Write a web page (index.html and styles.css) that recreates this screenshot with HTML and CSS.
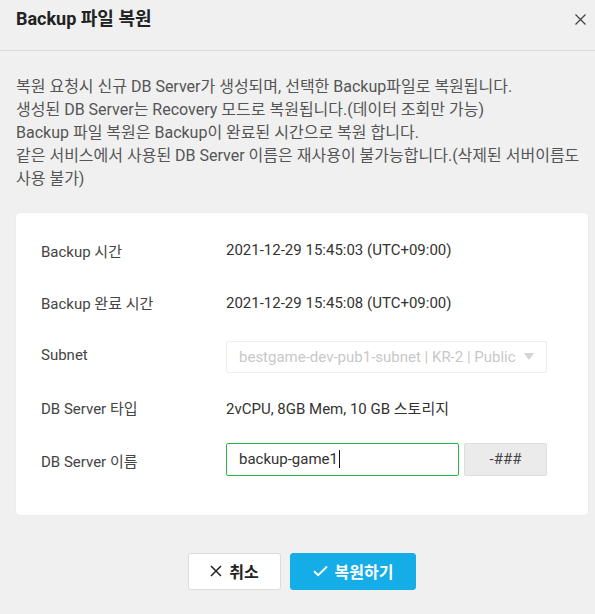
FILE: index.html
```html
<!DOCTYPE html>
<html lang="ko">
<head>
<meta charset="utf-8">
<link rel="stylesheet" href="styles.css">
</head>
<body>
<div class="dialog">
  <header class="head">
    <h1 class="title">Backup 파일 복원</h1>
    <button class="close" aria-label="닫기">
      <svg width="11" height="11" viewBox="0 0 11 11"><path d="M0.5 0.5L10.5 10.5M10.5 0.5L0.5 10.5" stroke="#444" stroke-width="1.3" fill="none"/></svg>
    </button>
  </header>
  <div class="content">
    <p class="desc">복원 요청시 신규 DB Server가 생성되며, 선택한 Backup파일로 복원됩니다.<br>생성된 DB Server는 Recovery 모드로 복원됩니다.(데이터 조회만 가능)<br>Backup 파일 복원은 Backup이 완료된 시간으로 복원 합니다.<br>같은 서비스에서 사용된 DB Server 이름은 재사용이 불가능합니다.(삭제된 서버이름도 사용 불가)</p>
    <div class="card">
      <div class="row">
        <div class="label">Backup 시간</div>
        <div class="value">2021-12-29 15:45:03 (UTC+09:00)</div>
      </div>
      <div class="row">
        <div class="label">Backup 완료 시간</div>
        <div class="value">2021-12-29 15:45:08 (UTC+09:00)</div>
      </div>
      <div class="row">
        <div class="label">Subnet</div>
        <div class="select">
          <span class="select-text">bestgame-dev-pub1-subnet | KR-2 | Public</span>
          <span class="caret-down"></span>
        </div>
      </div>
      <div class="row">
        <div class="label">DB Server 타입</div>
        <div class="value">2vCPU, 8GB Mem, 10 GB 스토리지</div>
      </div>
      <div class="row">
        <div class="label">DB Server 이름</div>
        <div class="name-group">
          <div class="input"><span>backup-game1</span><span class="cursor"></span></div>
          <div class="suffix">-###</div>
        </div>
      </div>
    </div>
    <div class="actions">
      <button class="btn btn-cancel">
        <svg width="12" height="12" viewBox="0 0 12 12"><path d="M1 1L11 11M11 1L1 11" stroke="#222" stroke-width="1.5" fill="none"/></svg>
        <span>취소</span>
      </button>
      <button class="btn btn-primary">
        <svg width="15" height="12" viewBox="0 0 15 12"><path d="M1 6.2L5.2 10.2L14 1.5" stroke="#fff" stroke-width="2" fill="none"/></svg>
        <span>복원하기</span>
      </button>
    </div>
  </div>
</div>
</body>
</html>
```
FILE: styles.css
```css
* { box-sizing: border-box; }
html, body {
  margin: 0;
  padding: 0;
  background: #f0f0f0;
}
body {
  font-family: Roboto, "Noto Sans CJK KR", sans-serif;
  font-size: 15px;
  color: #444;
}
.dialog {
  width: 595px;
  height: 614px;
}
.head {
  height: 51px;
  border-bottom: 1px solid #dcdcdc;
  display: flex;
  align-items: flex-start;
  justify-content: space-between;
  padding: 0 9px 0 16px;
}
.title {
  margin: 5px 0 0;
  font-size: 18px;
  font-weight: 700;
  color: #222;
  line-height: 27px;
}
.close {
  margin-top: 14px;
  border: 0;
  background: none;
  padding: 0;
  width: 11px;
  height: 11px;
  display: flex;
}
.content {
  padding: 0 7px 0 16px;
}
.desc {
  margin: 24px 0 0;
  line-height: 23px;
  color: #555;
  font-size: 16px;
}
.card {
  margin-top: 23px;
  background: #fff;
  border-radius: 4px;
  box-shadow: 0 0 1px rgba(0,0,0,0.12);
  padding: 21px 41px 38px 25px;
  display: flex;
  flex-direction: column;
  gap: 20px;
}
.row {
  display: flex;
  align-items: center;
  height: 32.5px;
}
.label {
  width: 185px;
  flex: none;
  color: #444;
}
.value {
  color: #333;
}
.select {
  width: 321px;
  height: 32px;
  border: 1px solid #eee;
  border-radius: 2px;
  display: flex;
  align-items: center;
  padding: 0 12px 0 12px;
  justify-content: space-between;
  margin-top: 3px;
}
.select-text {
  color: #c8c8c8;
}
.caret-down {
  width: 0;
  height: 0;
  border-left: 5px solid transparent;
  border-right: 5px solid transparent;
  border-top: 7px solid #d4d4d4;
}
.name-group {
  display: flex;
  gap: 5px;
  margin-top: -2px;
}
.input {
  width: 233px;
  height: 33px;
  border: 1px solid #2bb44a;
  border-radius: 2px;
  display: flex;
  align-items: center;
  padding: 0 12px;
  color: #333;
}
.cursor {
  width: 1px;
  height: 18px;
  background: #111;
  margin-left: 1px;
}
.suffix {
  width: 83px;
  height: 33px;
  background: #ebebeb;
  border: 1px solid #dedede;
  border-radius: 2px;
  display: flex;
  align-items: center;
  justify-content: center;
  color: #444;
}
.actions {
  margin-top: 38px;
  display: flex;
  justify-content: center;
  gap: 9px;
}
.btn {
  height: 37px;
  border-radius: 3px;
  font-family: "Noto Sans CJK KR", sans-serif;
  font-size: 16px;
  font-weight: 700;
  display: flex;
  align-items: center;
  justify-content: center;
  gap: 7px;
  padding: 0;
  cursor: pointer;
}
.btn-cancel {
  width: 93px;
  background: #fff;
  border: 1px solid #dcdcdc;
  color: #222;
}
.btn-primary {
  width: 126px;
  background: #14ade8;
  border: 1px solid #14ade8;
  color: #fff;
}
```
